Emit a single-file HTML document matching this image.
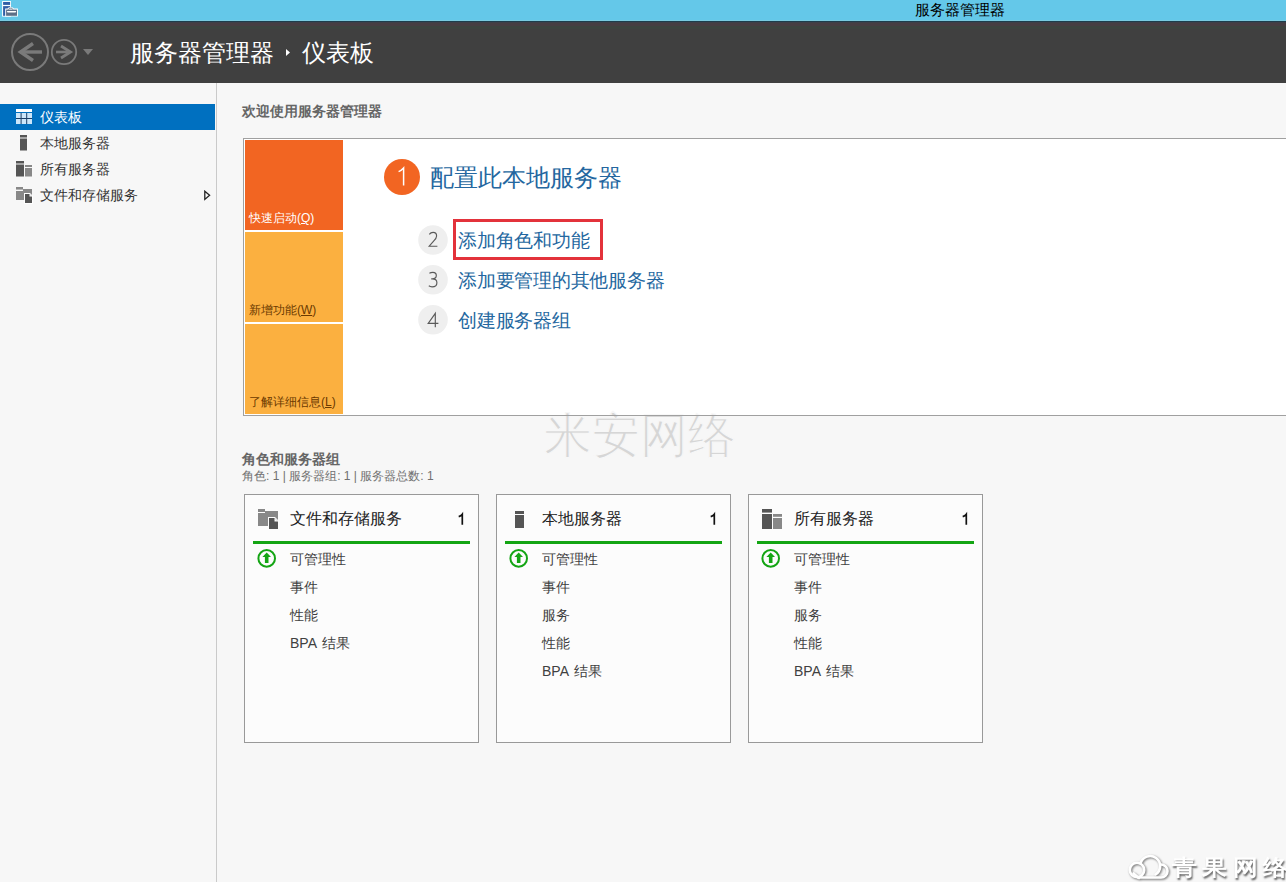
<!DOCTYPE html>
<html><head><meta charset="utf-8">
<style>
*{margin:0;padding:0;box-sizing:border-box}
html,body{width:1286px;height:882px;overflow:hidden;background:#f7f7f7;font-family:"Liberation Sans",sans-serif}
.a{position:absolute;white-space:nowrap}
#tb{left:0;top:0;width:1286px;height:21px;background:#64c8e9}
#hd{left:0;top:21px;width:1286px;height:62px;background:#404040}
#sb{left:216px;top:83px;width:1px;height:799px;background:#cacaca}
.t{line-height:1}
</style></head><body>
<div class="a" id="tb"></div>
<div class="a t" style="left:915px;top:2px;font-size:15px;color:#000">服务器管理器</div>
<svg class="a" style="left:0;top:0" width="20" height="20" viewBox="0 0 20 20">
 <rect x="2.1" y="1.1" width="8.9" height="4.6" fill="#fff"/>
 <rect x="2.1" y="5.1" width="8.9" height="11.5" fill="#fff"/>
 <rect x="3.1" y="2" width="7" height="2.9" fill="#2f5ea6"/>
 <rect x="3.1" y="6.1" width="7" height="9.7" fill="#2f5ea6"/>
 <path d="M5.2 8.6 H7.6 C8 7.6 8.8 7.2 10.7 7.2 C12.6 7.2 13.4 7.6 13.8 8.6 H17.9 V16.6 H5.2 Z" fill="#fff"/>
 <rect x="6.1" y="9.6" width="10.9" height="6.2" fill="#5c6f88"/>
 <path d="M8.6 9.6 C8.8 8.6 9.4 8.2 10.7 8.2 C12 8.2 12.6 8.6 12.8 9.6" fill="none" stroke="#5c6f88" stroke-width="0.9"/>
 <path d="M6.8 11 H16.3 L15.6 12.6 H7.5 Z" fill="#fff"/>
</svg>
<div class="a" id="hd"></div>
<div class="a" style="left:0;top:20px;width:1286px;height:10px;background:linear-gradient(to bottom,#78cbe0 0px,#78cbe0 1px,#1e3e4c 1px,#1e3e4c 2px,#3e4048 2px,#3e4048 3px,#463e42 3px,#463e42 6px,#3d443f 6px,#3d443f 9px,#404040 9px)"></div>
<!-- nav buttons -->
<svg class="a" style="left:0;top:21px" width="110" height="62" viewBox="0 21 110 62">
 <circle cx="30" cy="52" r="18" fill="none" stroke="#7a7a7a" stroke-width="2"/>
 <path d="M20 52 L42 52" stroke="#7a7a7a" stroke-width="3.4"/>
 <path d="M33 43.5 L20.5 52 L33 60.5" fill="none" stroke="#7a7a7a" stroke-width="3.4" stroke-linejoin="miter"/>
 <circle cx="64" cy="52" r="12.2" fill="none" stroke="#7a7a7a" stroke-width="1.8"/>
 <path d="M56 52 L70 52" stroke="#7a7a7a" stroke-width="2.6"/>
 <path d="M61 46 L70.5 52 L61 58" fill="none" stroke="#7a7a7a" stroke-width="2.8"/>
 <path d="M83 49 L93 49 L88 55 Z" fill="#7a7a7a"/>
</svg>
<div class="a t" style="left:130px;top:41px;font-size:24px;color:#fff">服务器管理器</div>
<svg class="a" style="left:285px;top:48px" width="6" height="9"><path d="M1 1 L5 4.5 L1 8 Z" fill="#fff"/></svg>
<div class="a t" style="left:302px;top:41px;font-size:24px;color:#fff">仪表板</div>

<!-- sidebar -->
<div class="a" id="sb"></div>
<div class="a" style="left:0;top:104px;width:215px;height:26px;background:#0070c0"></div>
<div class="a t" style="left:40px;top:110px;font-size:14px;color:#fff">仪表板</div>
<div class="a t" style="left:40px;top:136px;font-size:14px;color:#333">本地服务器</div>
<div class="a t" style="left:40px;top:162px;font-size:14px;color:#333">所有服务器</div>
<div class="a t" style="left:40px;top:188px;font-size:14px;color:#333">文件和存储服务</div>

<svg class="a" style="left:14px;top:104px" width="20" height="104" viewBox="14 104 20 104">
 <rect x="16" y="109" width="16" height="3" fill="#fff"/>
 <rect x="16" y="113" width="16" height="11" fill="#1a3e66"/>
 <rect x="16" y="113" width="4.6" height="5" fill="#cce6fa"/>
 <rect x="21.6" y="113" width="4.6" height="5" fill="#cce6fa"/>
 <rect x="27.2" y="113" width="4.8" height="5" fill="#cce6fa"/>
 <rect x="16" y="119" width="4.6" height="5" fill="#cce6fa"/>
 <rect x="21.6" y="119" width="4.6" height="5" fill="#cce6fa"/>
 <rect x="27.2" y="119" width="4.8" height="5" fill="#cce6fa"/>
 <rect x="20" y="135" width="7" height="2.5" fill="#555"/>
 <rect x="20" y="138.5" width="7" height="12" fill="#555"/>
 <rect x="16" y="161" width="8" height="2.5" fill="#555"/>
 <rect x="16" y="164.5" width="8" height="12" fill="#555"/>
 <rect x="25" y="165" width="7" height="2" fill="#888"/>
 <rect x="25" y="168" width="7" height="8.5" fill="#888"/>
 <rect x="16" y="187" width="7" height="2.6" fill="#888"/>
 <path d="M16 191 H23 V189 H32 V200 H16 Z" fill="#888"/>
 <path d="M24 193 H30 L33 196 V204 H24 Z" fill="#fff"/>
 <path d="M25 194 H29.5 L32 196.5 V203 H25 Z" fill="#555"/>
 <path d="M29.5 194 V196.5 H32" fill="#fff"/>
</svg>
<svg class="a" style="left:203px;top:190px" width="9" height="12"><path d="M1.8 1.2 L6.6 5.3 L1.8 9.4 Z" fill="none" stroke="#222" stroke-width="1.3" stroke-linejoin="miter"/></svg>

<!-- welcome -->
<div class="a t" style="left:242px;top:104px;font-size:14px;font-weight:bold;color:#666">欢迎使用服务器管理器</div>
<div class="a" style="left:243px;top:138px;width:1100px;height:278px;background:#fff;border:1px solid #a0a0a0"></div>
<div class="a" style="left:245px;top:140px;width:98px;height:90px;background:#f26522"></div>
<div class="a" style="left:245px;top:232px;width:98px;height:90px;background:#fbb040"></div>
<div class="a" style="left:245px;top:324px;width:98px;height:90px;background:#fbb040"></div>
<div class="a t" style="left:249px;top:212px;font-size:12px;color:#fff">快速启动(<u>Q</u>)</div>
<div class="a t" style="left:249px;top:304px;font-size:12px;color:#6b3a00">新增功能(<u>W</u>)</div>
<div class="a t" style="left:249px;top:396px;font-size:12px;color:#6b3a00">了解详细信息(<u>L</u>)</div>

<svg class="a" style="left:380px;top:155px" width="70" height="185" viewBox="380 155 70 185">
 <circle cx="402" cy="177" r="18" fill="#f26522"/>
 <path d="M398.6 171.6 C400.6 170.8 402.2 169.6 403.6 168 V185.5" fill="none" stroke="#fff" stroke-width="1.5"/>
 <circle cx="433" cy="240" r="14.8" fill="#efefef"/>
 <circle cx="433" cy="279.7" r="14.8" fill="#efefef"/>
 <circle cx="433" cy="319.8" r="14.8" fill="#efefef"/>
 <g fill="none" stroke="#5a5a5a" stroke-width="1.15">
 <path d="M429.3 234.4 C430.4 232.9 431.8 232.4 433.1 232.4 C435.3 232.4 436.6 233.9 436.6 235.9 C436.6 237.7 435.7 239 433.6 241.1 L429.2 246.2 H437.4"/>
 <path d="M429.4 273.2 C430.4 272.6 431.7 272.4 432.9 272.4 C435.1 272.4 436.3 273.7 436.3 275.6 C436.3 277.6 434.7 278.9 432.2 278.9 H431.2 M432.2 278.9 C435 278.9 436.9 280.4 436.9 282.7 C436.9 285.2 434.8 286.8 432.1 286.8 C430.7 286.8 429.6 286.4 428.8 285.8"/>
 <path d="M435.3 327.2 V313.4 L428.2 323.3 H438.4"/>
 </g>
</svg>
<div class="a t" style="left:430px;top:166px;font-size:24px;color:#2467a0">配置此本地服务器</div>

<div class="a t" style="left:458px;top:232px;font-size:18.5px;letter-spacing:-0.25px;color:#2467a0">添加角色和功能</div>
<div class="a t" style="left:458px;top:272px;font-size:18.5px;letter-spacing:-0.25px;color:#2467a0">添加要管理的其他服务器</div>
<div class="a t" style="left:458px;top:312px;font-size:18.5px;letter-spacing:-0.25px;color:#2467a0">创建服务器组</div>
<div class="a" style="left:453px;top:219px;width:150px;height:41px;border:3px solid #e3323b"></div>

<div class="a t" style="left:544px;top:412px;font-size:48px;color:#d6d6d6;-webkit-text-stroke:1.1px #f7f7f7;font-family:'Liberation Serif',serif">米安网络</div>

<div class="a" style="left:243px;top:415px;width:1043px;height:1px;background:#a0a0a0"></div>
<!-- roles -->
<div class="a t" style="left:242px;top:452px;font-size:14px;font-weight:bold;color:#666">角色和服务器组</div>
<div class="a t" style="left:242px;top:470px;font-size:12px;color:#707070">角色: 1 | 服务器组: 1 | 服务器总数: 1</div>

<div class="a" style="left:244px;top:494px;width:235px;height:249px;background:#fcfcfc;border:1px solid #999"></div>
<svg class="a" style="left:244px;top:494px" width="235" height="80" viewBox="0 0 235 80"><rect x="14" y="15" width="7" height="3" fill="#888"/><path d="M14 19 H21 V17 H34 V32 H14 Z" fill="#888"/><path d="M24 23 H31 L35 27 V36 H24 Z" fill="#fcfcfc"/><path d="M25 24 H30.5 L34 27.5 V35 H25 Z" fill="#555"/><path d="M30.5 24 V27.5 H34 Z" fill="#fcfcfc"/><path d="M214.7 22.6 C216.2 22.2 217.4 21.4 218.3 20.2 V30.8" fill="none" stroke="#111" stroke-width="1.7"/><rect x="9" y="47" width="217" height="3" fill="#14a514"/><circle cx="22.7" cy="64.4" r="8.3" fill="none" stroke="#14a514" stroke-width="2"/><path d="M22.7 58.5 L27 63 H24.5 V69 H20.9 V63 H18.4 Z" fill="#14a514"/></svg>
<div class="a t" style="left:290px;top:511px;font-size:16px;color:#222">文件和存储服务</div>
<div class="a t" style="left:290px;top:552px;font-size:14px;color:#404040">可管理性</div>
<div class="a t" style="left:290px;top:580px;font-size:14px;color:#404040">事件</div>
<div class="a t" style="left:290px;top:608px;font-size:14px;color:#404040">性能</div>
<div class="a t" style="left:290px;top:636px;font-size:14px;color:#404040;word-spacing:1.5px">BPA 结果</div>
<div class="a" style="left:496px;top:494px;width:235px;height:249px;background:#fcfcfc;border:1px solid #999"></div>
<svg class="a" style="left:496px;top:494px" width="235" height="80" viewBox="0 0 235 80"><rect x="19" y="17" width="9" height="3" fill="#555"/><rect x="19" y="21" width="9" height="13" fill="#555"/><path d="M214.7 22.6 C216.2 22.2 217.4 21.4 218.3 20.2 V30.8" fill="none" stroke="#111" stroke-width="1.7"/><rect x="9" y="47" width="217" height="3" fill="#14a514"/><circle cx="22.7" cy="64.4" r="8.3" fill="none" stroke="#14a514" stroke-width="2"/><path d="M22.7 58.5 L27 63 H24.5 V69 H20.9 V63 H18.4 Z" fill="#14a514"/></svg>
<div class="a t" style="left:542px;top:511px;font-size:16px;color:#222">本地服务器</div>
<div class="a t" style="left:542px;top:552px;font-size:14px;color:#404040">可管理性</div>
<div class="a t" style="left:542px;top:580px;font-size:14px;color:#404040">事件</div>
<div class="a t" style="left:542px;top:608px;font-size:14px;color:#404040">服务</div>
<div class="a t" style="left:542px;top:636px;font-size:14px;color:#404040">性能</div>
<div class="a t" style="left:542px;top:664px;font-size:14px;color:#404040;word-spacing:1.5px">BPA 结果</div>
<div class="a" style="left:748px;top:494px;width:235px;height:249px;background:#fcfcfc;border:1px solid #999"></div>
<svg class="a" style="left:748px;top:494px" width="235" height="80" viewBox="0 0 235 80"><rect x="14" y="15" width="10" height="3.6" fill="#555"/><rect x="14" y="20" width="10" height="15" fill="#555"/><rect x="25" y="20" width="9" height="2.8" fill="#888"/><rect x="25" y="24" width="9" height="11" fill="#888"/><path d="M214.7 22.6 C216.2 22.2 217.4 21.4 218.3 20.2 V30.8" fill="none" stroke="#111" stroke-width="1.7"/><rect x="9" y="47" width="217" height="3" fill="#14a514"/><circle cx="22.7" cy="64.4" r="8.3" fill="none" stroke="#14a514" stroke-width="2"/><path d="M22.7 58.5 L27 63 H24.5 V69 H20.9 V63 H18.4 Z" fill="#14a514"/></svg>
<div class="a t" style="left:794px;top:511px;font-size:16px;color:#222">所有服务器</div>
<div class="a t" style="left:794px;top:552px;font-size:14px;color:#404040">可管理性</div>
<div class="a t" style="left:794px;top:580px;font-size:14px;color:#404040">事件</div>
<div class="a t" style="left:794px;top:608px;font-size:14px;color:#404040">服务</div>
<div class="a t" style="left:794px;top:636px;font-size:14px;color:#404040">性能</div>
<div class="a t" style="left:794px;top:664px;font-size:14px;color:#404040;word-spacing:1.5px">BPA 结果</div>

<svg class="a" style="left:1120px;top:846px" width="54" height="36" viewBox="1120 846 54 36">
 <g fill="none" stroke="#fff" stroke-width="2.6" stroke-linecap="round" style="filter:drop-shadow(1px 1.5px 1px rgba(0,0,0,.55))">
 <circle cx="1137" cy="870" r="7.2"/>
 <path d="M1140.5 863.5 A10 10 0 1 1 1155.5 874.5"/>
 <path d="M1161 864.5 A6.5 6.5 0 0 1 1161 877.5 H1138"/>
 <path d="M1133.5 873.5 L1139 878"/>
 </g>
</svg>
<div class="a t" style="left:1172px;top:857px;font-size:24px;font-weight:bold;letter-spacing:5.8px;color:#fff;transform:scale(1.02,0.9);transform-origin:0 0;text-shadow:1px 2px 2px rgba(0,0,0,.6)">青果网络</div>
</body></html>
